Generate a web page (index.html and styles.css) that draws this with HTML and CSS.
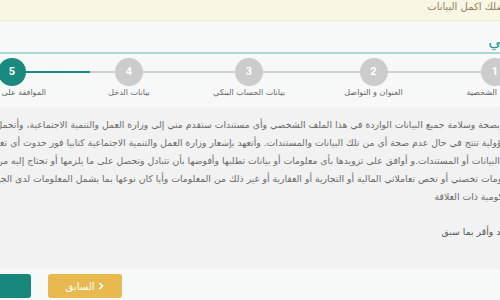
FILE: index.html
```html
<!DOCTYPE html>
<html lang="ar">
<head>
    <meta charset="UTF-8">
    <meta name="viewport" content="width=device-width, initial-scale=1.0">
    <link rel="stylesheet" href="styles.css">
</head>
<body>
    <div class="page" dir="rtl">
        <div class="alert">من فضلك اكمل البيانات</div>

        <div class="page-header">
            <h2 class="page-title">الملف الشخصي</h2>
        </div>

        <ol class="stepper">
            <li class="step">
                <span class="step-num">1</span>
                <span class="step-label">البيانات الشخصية</span>
            </li>
            <li class="step">
                <span class="step-num">2</span>
                <span class="step-label">العنوان و التواصل</span>
            </li>
            <li class="step">
                <span class="step-num">3</span>
                <span class="step-label">بيانات الحساب البنكي</span>
            </li>
            <li class="step">
                <span class="step-num">4</span>
                <span class="step-label">بيانات الدخل</span>
            </li>
            <li class="step step-active">
                <span class="step-num">5</span>
                <span class="step-label">الموافقة على الإقرار</span>
            </li>
        </ol>

        <div class="panel">
            <p class="terms">
                أقر بصحة وسلامة جميع البيانات الواردة في هذا الملف الشخصي وأي مستندات ستقدم مني إلى وزارة العمل والتنمية الاجتماعية، وأتحمل أي<br>
                مسؤولية تنتج في حال عدم صحة أي من تلك البيانات والمستندات. وأتعهد بإشعار وزارة العمل والتنمية الاجتماعية كتابيا فور حدوث أي تغيير<br>
                في البيانات أو المستندات.و أوافق على تزويدها بأي معلومات أو بيانات تطلبها وأفوضها بأن تتبادل وتحصل على ما يلزمها أو تحتاج إليه من<br>
                معلومات تخصني أو تخص تعاملاتي المالية أو التجارية أو العقارية أو غير ذلك من المعلومات وأيا كان نوعها بما يشمل المعلومات لدى الجهات<br>
                الحكومية ذات العلاقة
            </p>
            <p class="pledge">أتعهد وأقر بما سبق</p>
        </div>

        <div class="actions">
            <button class="btn btn-prev">
                <svg class="btn-icon" viewBox="0 0 8 10" width="6" height="8">
                    <path d="M2 1 L6 5 L2 9" fill="none" stroke="#fff" stroke-width="2.2"/>
                </svg>
                السابق
            </button>
            <button class="btn btn-next">التالي</button>
        </div>
    </div>
</body>
</html>
```

FILE: styles.css
```css
html, body {
    margin: 0;
    padding: 0;
    overflow: hidden;
}

body {
    background: #f7f8f8;
    font-family: 'DejaVu Sans', sans-serif;
}

/* page is wider than the window, the window shows its middle */
.page {
    width: 700px;
    margin-left: -70px;
}

.alert {
    height: 20px;
    padding-right: 104px;
    background: #faf6e4;
    border-bottom: 1px solid #f0e8cf;
    color: #8f8060;
    font-size: 10px;
    line-height: 14px;
}

.page-header {
    height: 31px;
    border-bottom: 2px solid #a8d8d1;
}

.page-title {
    margin: 0;
    padding: 10px 35px 0 0;
    color: #2a9d90;
    font-size: 16px;
    font-weight: normal;
    line-height: 20px;
}

.stepper {
    display: grid;
    grid-template-columns: 118px 125px 124px 116px 118px;
    margin: 0;
    padding: 4px 76px 8px 0;
    list-style: none;
    background:
        linear-gradient(#1b8a7e, #1b8a7e) 83px 17px / 77px 2px no-repeat,
        linear-gradient(#d0d0d0, #d0d0d0) 83px 17px / 482px 2px no-repeat;
}

.step {
    display: flex;
    flex-direction: column;
    align-items: center;
}

.step-num {
    width: 28px;
    height: 28px;
    border-radius: 50%;
    background: #cccccc;
    color: #fff;
    font-family: Roboto, sans-serif;
    font-size: 11px;
    font-weight: bold;
    line-height: 28px;
    text-align: center;
}

.step-active .step-num {
    background: #1b8a7e;
}

.step-label {
    margin-top: 1px;
    color: #666;
    font-size: 8px;
    line-height: 12px;
    white-space: nowrap;
}

.panel {
    padding: 9px 115px 28px 0;
    background: #f1f2f1;
}

.terms {
    margin: 0;
    color: #6b6b6b;
    font-size: 9.3px;
    line-height: 18px;
    white-space: nowrap;
}

.pledge {
    margin: 17px 0 0;
    color: #555;
    font-size: 9.3px;
    line-height: 18px;
}

.actions {
    display: flex;
    justify-content: flex-end;
    gap: 17px;
    height: 26px;
    padding-top: 5px;
}

.btn {
    display: flex;
    align-items: center;
    justify-content: center;
    gap: 4px;
    height: 24px;
    padding: 0;
    border: none;
    border-radius: 3px;
    color: #fff;
    font-family: 'DejaVu Sans', sans-serif;
    font-size: 10px;
}

.btn-prev {
    width: 74px;
    background: #e8b94f;
}

.btn-next {
    width: 101px;
    background: #17877b;
}
```
